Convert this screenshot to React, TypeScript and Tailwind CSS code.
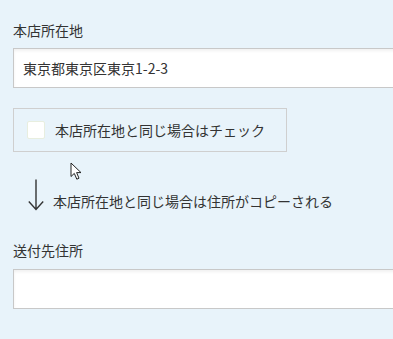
const jp = "font-['Noto_Sans_CJK_JP','Noto_Sans',sans-serif]";

function TextField({ value }: { value?: string }) {
  return (
    <div className="w-[420px] h-[40px] border border-[#c8c8c8] bg-white shadow-[inset_0_2px_3px_rgba(0,0,0,0.06)] flex items-center pl-[9px] text-[14px] text-[#333]">
      {value}
    </div>
  );
}

function Cursor() {
  return (
    <svg className="absolute left-[70px] top-[162px]" width="13" height="19" viewBox="0 0 13 19">
      <path
        d="M1 1 L1 14.5 L4.3 11.4 L6.8 17.2 L9 16.2 L6.6 10.6 L11 10.6 Z"
        fill="#fff"
        stroke="#222"
        strokeWidth="1"
        strokeLinejoin="miter"
      />
    </svg>
  );
}

export default function App() {
  return (
    <div className={`relative w-[393px] h-[339px] overflow-hidden bg-[#e8f3fa] ${jp} text-[#333]`}>
      <div className="pl-[13px] pt-[20px]">
        {/* 本店所在地 */}
        <div className="h-[20px] leading-[20px] text-[14px] mb-[8px]">本店所在地</div>
        <TextField value="東京都東京区東京1-2-3" />

        {/* checkbox */}
        <div className="mt-[20px] w-[274px] h-[44px] border border-[#cfcfcf] flex items-center pl-[13px]">
          <span className="w-[18px] h-[18px] bg-white border border-[#e8eedf] rounded-[2px]" />
          <span className="ml-[10px] text-[14px]">本店所在地と同じ場合はチェック</span>
        </div>

        {/* arrow note */}
        <div className="mt-[27px] flex items-center h-[32px]">
          <svg className="ml-[15px]" width="18" height="32" viewBox="0 0 18 32">
            <path d="M8 0.5 V30.5 M0.8 22.5 L8 30.5 L15.2 22.5" fill="none" stroke="#333" strokeWidth="1.4" />
          </svg>
          <span className="ml-[7px] mt-[12px] text-[14px]">本店所在地と同じ場合は住所がコピーされる</span>
        </div>

        {/* 送付先住所 */}
        <div className="mt-[29px] h-[20px] leading-[20px] text-[14px] mb-[9px]">送付先住所</div>
        <TextField />
      </div>
      <Cursor />
    </div>
  );
}
